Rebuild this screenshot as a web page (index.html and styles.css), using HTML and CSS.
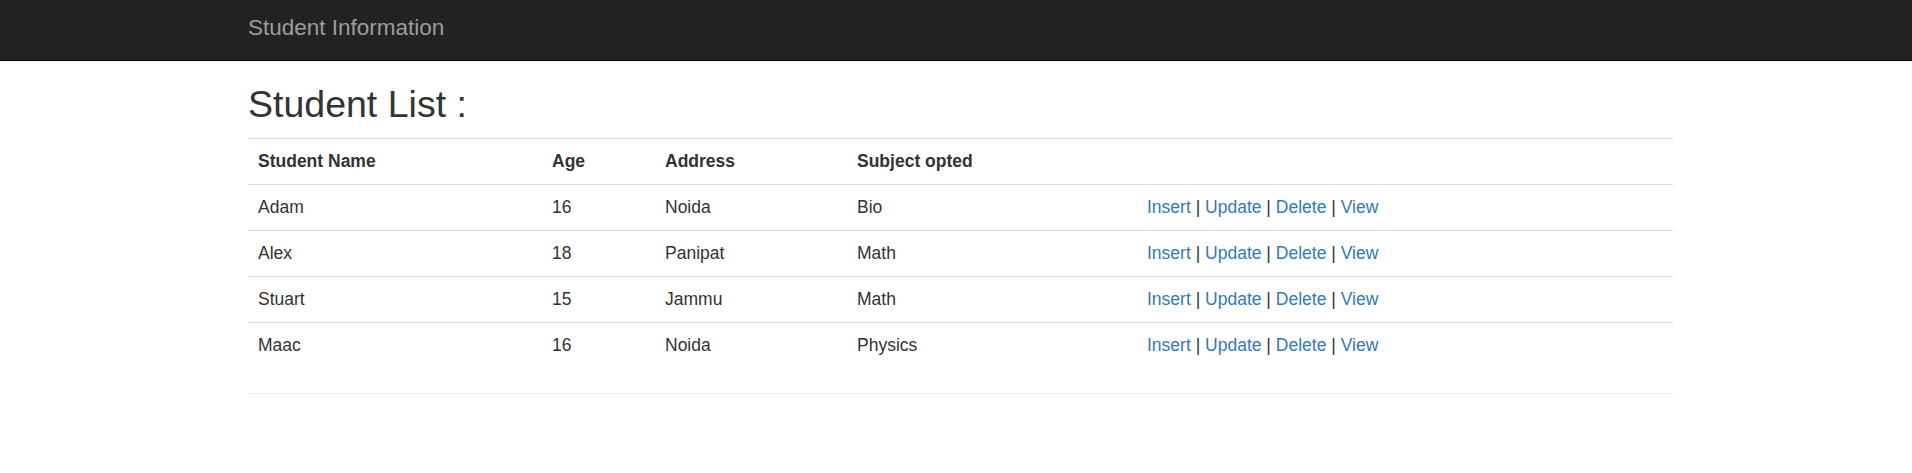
FILE: index.html
```html
<!DOCTYPE html>
<html lang="en">
<head>
<meta charset="utf-8">
<title>Student List</title>
<link rel="stylesheet" href="styles.css">
</head>
<body>
<nav class="navbar">
  <div class="container">
    <a class="brand" href="#">Student Information</a>
  </div>
</nav>
<main class="container">
  <h2 class="title">Student List :</h2>
  <table class="table">
    <tr>
      <th class="c-name">Student Name</th>
      <th class="c-age">Age</th>
      <th class="c-addr">Address</th>
      <th class="c-subj">Subject opted</th>
      <th class="c-act"></th>
    </tr>
    <tr>
      <td>Adam</td><td>16</td><td>Noida</td><td>Bio</td>
      <td><a href="#">Insert</a> | <a href="#">Update</a> | <a href="#">Delete</a> | <a href="#">View</a></td>
    </tr>
    <tr>
      <td>Alex</td><td>18</td><td>Panipat</td><td>Math</td>
      <td><a href="#">Insert</a> | <a href="#">Update</a> | <a href="#">Delete</a> | <a href="#">View</a></td>
    </tr>
    <tr>
      <td>Stuart</td><td>15</td><td>Jammu</td><td>Math</td>
      <td><a href="#">Insert</a> | <a href="#">Update</a> | <a href="#">Delete</a> | <a href="#">View</a></td>
    </tr>
    <tr>
      <td>Maac</td><td>16</td><td>Noida</td><td>Physics</td>
      <td><a href="#">Insert</a> | <a href="#">Update</a> | <a href="#">Delete</a> | <a href="#">View</a></td>
    </tr>
  </table>
  <hr class="rule">
</main>
</body>
</html>
```
FILE: styles.css
```css
* { box-sizing: border-box; }
html, body { margin: 0; padding: 0; background: #fff; }
body {
  font-family: "Liberation Sans", Arial, Helvetica, sans-serif;
  font-size: 17.5px;
  line-height: 25px;
  color: #333;
}
.container {
  width: 1425px;
  margin-left: 248px;
}
.navbar {
  height: 61px;
  background: #222;
  border-bottom: 1px solid #080808;
}
.brand {
  display: inline-block;
  padding-top: 15px;
  font-size: 22.5px;
  line-height: 25px;
  color: #9d9d9d;
  text-decoration: none;
}
.title {
  margin: 23px 0 13px;
  font-size: 37.5px;
  line-height: 41.25px;
  font-weight: 500;
  color: #333;
}
.table {
  width: 100%;
  border-collapse: collapse;
  border-spacing: 0;
  margin-bottom: 25px;
}
.table th, .table td {
  padding: 10px;
  line-height: 25px;
  text-align: left;
  vertical-align: top;
  border-top: 1px solid #ddd;
}
.table th { font-weight: bold; }
.c-name { width: 294px; }
.c-age { width: 113px; }
.c-addr { width: 192px; }
.c-subj { width: 290px; }
.table a { color: #337ab7; text-decoration: none; }
.rule {
  margin: 0;
  border: 0;
  border-top: 1px solid #eee;
}
```
